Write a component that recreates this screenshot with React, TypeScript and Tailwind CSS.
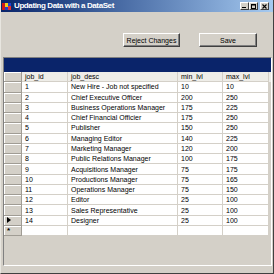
const rows = [
  ["1", "New Hire - Job not specified", "10", "10"],
  ["2", "Chief Executive Officer", "200", "250"],
  ["3", "Business Operations Manager", "175", "225"],
  ["4", "Chief Financial Officier", "175", "250"],
  ["5", "Publisher", "150", "250"],
  ["6", "Managing Editor", "140", "225"],
  ["7", "Marketing Manager", "120", "200"],
  ["8", "Public Relations Manager", "100", "175"],
  ["9", "Acquisitions Manager", "75", "175"],
  ["10", "Productions Manager", "75", "165"],
  ["11", "Operations Manager", "75", "150"],
  ["12", "Editor", "25", "100"],
  ["13", "Sales Representative", "25", "100"],
  ["14", "Designer", "25", "100"],
];

const cols = "grid grid-cols-[18px_46px_110px_45px_46px]";
const cell = "h-full border-r border-b border-[#d4d0c8] pl-[3px] flex items-center overflow-hidden whitespace-nowrap";
const rowHead = "h-full bg-[#d4d0c8] border-r border-b border-[#a09c94] shadow-[inset_1px_1px_#ffffff] flex items-center pl-[3px]";

const CapButton = ({ children }: { children: React.ReactNode }) => (
  <div className="w-[9px] h-[8px] bg-[#d4d0c8] border-t border-l border-t-white border-l-white border-r border-b border-r-[#404040] border-b-[#404040] flex items-center justify-center">
    {children}
  </div>
);

const Button = ({ label, w }: { label: string; w: string }) => (
  <button className={`${w} h-[14px] bg-[#d4d0c8] border-t border-l border-t-white border-l-white border-r border-b border-r-[#404040] border-b-[#404040] shadow-[inset_-1px_-1px_#808080] text-[7px] leading-none text-black`}>
    {label}
  </button>
);

export default function App() {
  return (
    <div className="w-[274px] h-[274px] bg-[#d4d0c8] flex flex-col overflow-hidden border-l border-l-[#e8e6e0] border-r border-r-[#404040] border-b border-b-[#404040] font-['Liberation_Sans',Arial,sans-serif]">
      {/* title bar */}
      <div className="h-[12px] shrink-0 bg-linear-to-r from-[#0a246a] to-[#a6caf0] flex items-center pl-[1px] pr-[4px]">
        <svg width="9" height="9" viewBox="0 0 9 9">
          <rect x="0" y="1" width="3" height="7" fill="#d01818" />
          <rect x="3" y="1" width="3" height="4" fill="#f0d020" />
          <rect x="3" y="5" width="3" height="3" fill="#2040d0" />
          <rect x="6" y="1" width="3" height="3" fill="#2040d0" />
          <rect x="6" y="4" width="3" height="4" fill="#e83030" />
        </svg>
        <span className="ml-[3px] text-white font-bold text-[8px] tracking-[-0.4px] leading-none">Updating Data with a DataSet</span>
        <div className="ml-auto flex">
          <CapButton>
            <svg width="5" height="5" viewBox="0 0 5 5"><rect x="0" y="3" width="4" height="1" fill="#000" /></svg>
          </CapButton>
          <CapButton>
            <svg width="5" height="5" viewBox="0 0 5 5"><rect x="0.5" y="0.5" width="4" height="4" fill="none" stroke="#000" /><rect x="0" y="0" width="5" height="1.5" fill="#000" /></svg>
          </CapButton>
          <div className="w-[2px]" />
          <CapButton>
            <svg width="5" height="5" viewBox="0 0 5 5"><path d="M0.5 0.5 L4.5 4.5 M4.5 0.5 L0.5 4.5" stroke="#000" strokeWidth="1.1" /></svg>
          </CapButton>
        </div>
      </div>

      {/* buttons */}
      <div className="mt-[21px] flex pl-[122px] gap-[19px]">
        <Button label="Reject Changes" w="w-[57px]" />
        <Button label="Save" w="w-[58px]" />
      </div>

      {/* data grid */}
      <div className="mt-[10px] ml-[2px] w-[269px] h-[209px] border-t border-l border-t-[#808080] border-l-[#808080] border-b border-r border-b-white border-r-white flex flex-col bg-[#d4d0c8] text-[7px] text-black leading-none">
        <div className="h-[14px] bg-[#0a246a] shrink-0" />
        <div className={`${cols} h-[10.3px] bg-[#eeede8]`}>
          <div className={rowHead} />
          <div className={cell}>job_id</div>
          <div className={cell}>job_desc</div>
          <div className={cell}>min_lvl</div>
          <div className={cell}>max_lvl</div>
        </div>
        {rows.map((r, i) => (
          <div key={r[0]} className={`${cols} h-[10.27px]`}>
            <div className={rowHead}>
              {i === rows.length - 1 && (
                <svg width="4" height="6" viewBox="0 0 4 6"><path d="M0 0 L4 3 L0 6 Z" fill="#000" /></svg>
              )}
            </div>
            <div className={`${cell} bg-white`}>{r[0]}</div>
            <div className={`${cell} bg-white`}>{r[1]}</div>
            <div className={`${cell} bg-white`}>{r[2]}</div>
            <div className={`${cell} bg-white`}>{r[3]}</div>
          </div>
        ))}
        <div className={`${cols} h-[10.27px]`}>
          <div className={`${rowHead} text-[8px] font-bold`}>*</div>
          <div className={`${cell} bg-white`} />
          <div className={`${cell} bg-white`} />
          <div className={`${cell} bg-white`} />
          <div className={`${cell} bg-white`} />
        </div>
      </div>
    </div>
  );
}
